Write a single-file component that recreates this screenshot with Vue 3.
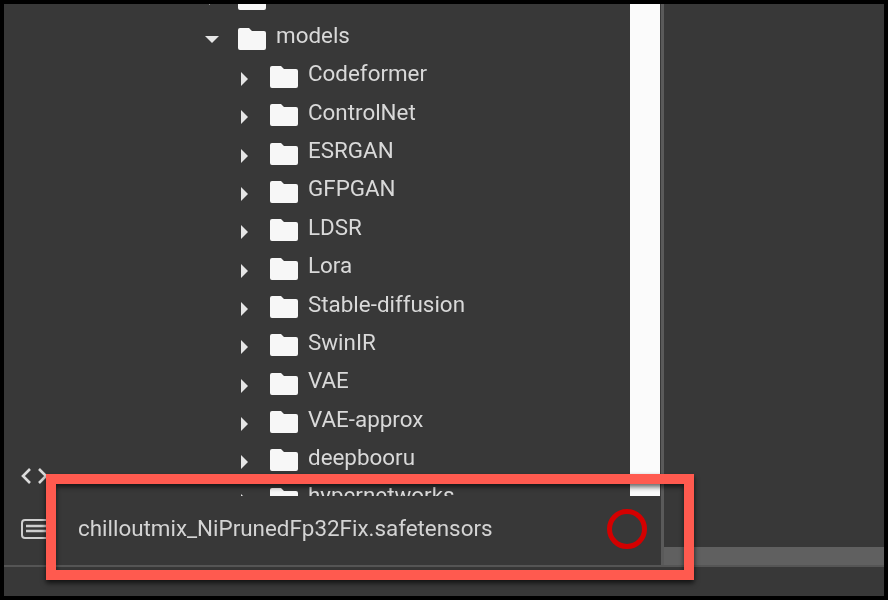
<script setup>
const folders = [
  'Codeformer', 'ControlNet', 'ESRGAN', 'GFPGAN', 'LDSR', 'Lora',
  'Stable-diffusion', 'SwinIR', 'VAE', 'VAE-approx', 'deepbooru', 'hypernetworks',
]
</script>

<template>
  <div class="frame">
    <div class="panel">
      <div class="main">
        <div class="rail">
          <svg class="code-icon" width="32" height="18" viewBox="0 0 32 18">
            <path d="M13 2 L6 9 L13 16 M22 2 L29 9 L22 16" fill="none" stroke="#dcdcdc" stroke-width="2.6" />
          </svg>
          <svg class="term-icon" width="30" height="20" viewBox="0 0 30 20">
            <rect x="1" y="1" width="28" height="18" rx="3" fill="none" stroke="#cfcfcf" stroke-width="2" />
            <path d="M5 7 H25 M5 12 H25" stroke="#cfcfcf" stroke-width="2.5" />
          </svg>
        </div>

        <div class="tree">
          <div class="row row-top">
            <svg class="caret" viewBox="0 0 16 16"><path d="M5 1 L12 8 L5 15 Z" /></svg>
            <svg class="folder" viewBox="0 0 28 22"><path d="M2 0 H11 L14 3 H26 Q28 3 28 5 V20 Q28 22 26 22 H2 Q0 22 0 20 V2 Q0 0 2 0 Z" /></svg>
            <span class="name">stable-diffusion-webui</span>
          </div>
          <div class="row">
            <svg class="caret open" viewBox="0 0 16 16"><path d="M1 5 H15 L8 12 Z" /></svg>
            <svg class="folder" viewBox="0 0 28 22"><path d="M2 0 H11 L14 3 H26 Q28 3 28 5 V20 Q28 22 26 22 H2 Q0 22 0 20 V2 Q0 0 2 0 Z" /></svg>
            <span class="name">models</span>
          </div>
          <div v-for="folder in folders" :key="folder" class="row child">
            <svg class="caret" viewBox="0 0 16 16"><path d="M5 1 L12 8 L5 15 Z" /></svg>
            <svg class="folder" viewBox="0 0 28 22"><path d="M2 0 H11 L14 3 H26 Q28 3 28 5 V20 Q28 22 26 22 H2 Q0 22 0 20 V2 Q0 0 2 0 Z" /></svg>
            <span class="name">{{ folder }}</span>
          </div>
        </div>

        <div class="scrollbar"></div>

        <div class="side">
          <div class="side-thumb"></div>
        </div>
      </div>

      <div class="callout">
        <span class="file-name">chilloutmix_NiPrunedFp32Fix.safetensors</span>
        <span class="ring"></span>
      </div>
    </div>
  </div>
</template>

<style>
html,
body {
  margin: 0;
  background: #000;
}
</style>

<style scoped>
.frame {
  width: 888px;
  height: 600px;
  box-sizing: border-box;
  padding: 4px;
  background: #000;
}

.panel {
  position: relative;
  height: 592px;
  background: #383838;
  font-family: Roboto, "Liberation Sans", sans-serif;
}

.main {
  display: flex;
  height: 563px;
  box-sizing: border-box;
  border-bottom: 2px solid #555;
}

.rail {
  width: 62px;
  flex: none;
  padding-left: 13px;
  padding-top: 463px;
  box-sizing: border-box;
  filter: blur(0.5px);
}

.code-icon,
.term-icon {
  display: block;
}

.term-icon {
  margin-top: 34px;
  margin-left: 4px;
}

.tree {
  width: 564px;
  height: 492px;
  flex: none;
  overflow: hidden;
  filter: blur(0.6px);
}

.row {
  display: flex;
  align-items: center;
  height: 38.36px;
  padding-left: 138px;
}

.row-top {
  margin-top: -26px;
  margin-bottom: 1px;
}

.row-top .name {
  margin-bottom: 9px;
}

.row-top .caret {
  margin-top: 2px;
}

.child {
  padding-left: 170px;
}

.caret {
  width: 16px;
  height: 16px;
  flex: none;
  fill: #e6e6e6;
  margin-top: 8px;
}

.caret.open {
  margin-top: 4px;
}

.folder {
  width: 28px;
  height: 22px;
  flex: none;
  margin-left: 18px;
  margin-top: 4px;
  fill: #f7f7f7;
}

.name {
  margin-left: 10px;
  margin-bottom: 3px;
  font-size: 22.4px;
  color: #d9d9d9;
  white-space: nowrap;
}

.scrollbar {
  width: 30px;
  height: 492px;
  flex: none;
  background: #fbfbfb;
}

.side {
  flex: 1;
  display: flex;
  flex-direction: column;
  justify-content: flex-end;
  margin-left: 1px;
  border-left: 3px solid #5a5a5a;
}

.side-thumb {
  height: 18px;
  background: #606060;
}

.callout {
  position: absolute;
  left: 42px;
  top: 470px;
  width: 648px;
  height: 106px;
  box-sizing: border-box;
  display: flex;
  align-items: center;
  justify-content: space-between;
  padding: 2px 37px 0 22px;
  border: 10px solid #ff5a4f;
  box-shadow: 0 3px 5px rgba(0, 0, 0, 0.7), inset 0 3px 5px rgba(0, 0, 0, 0.6);
}

.file-name {
  font-size: 22.4px;
  color: #d4d4d4;
  filter: blur(0.5px);
}

.ring {
  width: 40px;
  height: 40px;
  margin-top: 2px;
  box-sizing: border-box;
  border: 5px solid #d40000;
  border-radius: 50%;
}
</style>
